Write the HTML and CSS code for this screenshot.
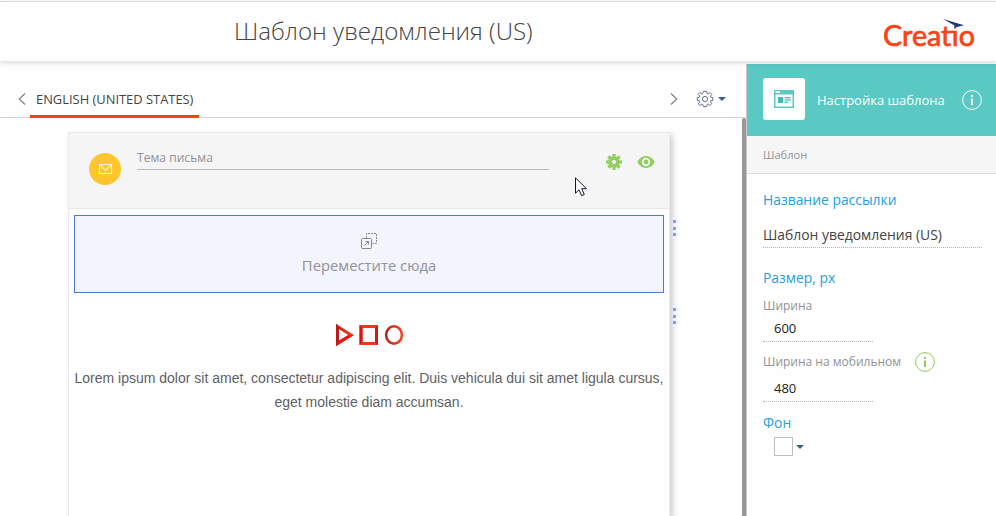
FILE: index.html
```html
<!DOCTYPE html>
<html lang="ru">
<head>
<meta charset="utf-8">
<title>Шаблон уведомления (US)</title>
<link rel="stylesheet" href="styles.css">
</head>
<body>
<div class="app">
  <header class="header">
    <h1 class="title">Шаблон уведомления (US)</h1>
    <svg class="logo" width="104" height="44" viewBox="-4 -2 104 44" role="img">
      <text class="logo-text" x="1" y="27.800" textLength="92" lengthAdjust="spacingAndGlyphs">Creatio</text>
      <rect x="70" y="3" width="9" height="7.600" fill="#fefefe"/>
      <path d="M61 1 82 7.200 75 9 72 10.500 72.500 7.500Z" fill="#173d74"/>
    </svg>
  </header>
  <div class="workspace">
    <main class="editor">
      <nav class="tabs">
        <svg class="chev-left" width="8" height="12" viewBox="0 0 8 12"><path d="M7 .5 1.2 6 7 11.5"/></svg>
        <div class="tab">ENGLISH (UNITED STATES)</div>
        <div class="tab-tools">
          <svg class="chev-right" width="8" height="12" viewBox="0 0 8 12"><path d="M1 .5 6.8 6 1 11.5"/></svg>
          <svg class="gear" width="18" height="18" viewBox="-9 -9 18 18">
            <path d="M-1.7-7.6H1.7L2.1-5.5 3.2-5 5-6.5 6.8-4.6 5.3-2.9 5.7-1.8 7.7-1.5V1.5L5.7 1.8 5.3 2.9 6.8 4.7 4.9 6.5 3.2 5 2.1 5.5 1.7 7.6H-1.7L-2.1 5.5-3.2 5-4.9 6.5-6.8 4.7-5.3 2.9-5.7 1.8-7.7 1.5V-1.5L-5.7-1.8-5.3-2.9-6.8-4.6-5-6.5-3.2-5-2.1-5.5Z"/>
            <circle r="2.6"/>
          </svg>
          <span class="caret"></span>
        </div>
      </nav>
      <div class="canvas">
        <section class="mail">
          <div class="mail-head">
            <svg class="avatar" width="32" height="32" viewBox="0 0 32 32">
              <circle cx="16" cy="16" r="16" fill="#fdc62c"/>
              <rect x="10.500" y="11.500" width="12" height="9"/>
              <path d="M11 12 16.500 17.500 22 12"/>
            </svg>
            <div class="subject">Тема письма</div>
            <svg class="settings" width="16" height="16" viewBox="-8 -8 16 16">
              <g fill="#94cd61"><circle r="5.6"/>
              <path id="tooth" d="M-1.5-8H1.5L1.9-4H-1.9Z"/>
              <use href="#tooth" transform="rotate(45)"/><use href="#tooth" transform="rotate(90)"/><use href="#tooth" transform="rotate(135)"/><use href="#tooth" transform="rotate(180)"/><use href="#tooth" transform="rotate(225)"/><use href="#tooth" transform="rotate(270)"/><use href="#tooth" transform="rotate(315)"/></g>
              <circle r="2.1" fill="#f5f5f6"/>
            </svg>
            <svg class="preview" width="18" height="12" viewBox="0 0 18 12">
              <path d="M.3 6C2 2.300 5.300 0 9 0S16 2.300 17.700 6C16 9.700 12.700 12 9 12S2 9.700.3 6Z" fill="#94cd61"/>
              <circle cx="9" cy="6" r="3.300" fill="#94cd61" stroke="#f5f5f6" stroke-width="1.700"/>
            </svg>
          </div>
          <div class="mail-body">
            <div class="drop">
              <svg class="move" width="16" height="16" viewBox="0 0 16 16">
                <path d="M5.500 5V.5H15.500V10.500H11.500" stroke-dasharray="2 1"/>
                <rect x=".5" y="5.500" width="10" height="10" rx="1"/>
                <path d="M3.500 12.500 7.500 8.500M4.500 8.500H7.500V11.500"/>
              </svg>
              <span>Переместите сюда</span>
            </div>
            <svg class="shapes" width="70" height="24" viewBox="0 0 70 24">
              <defs>
                <linearGradient id="red"><stop offset="0" stop-color="#b5231c"/><stop offset="1" stop-color="#fb3e1c"/></linearGradient>
              </defs>
              <path d="M2.500 3.500 16 12 2.500 20.500Z" fill="none" stroke="url(#red)" stroke-width="3"/>
              <path d="M1 1V23L4 18V6Z" fill="#b91b18"/><path d="M1 23 4 17.500 13.500 12H19Z" fill="#ea1710"/>
              <rect x="26" y="3.500" width="15.500" height="17" fill="none" stroke="#f93619" stroke-width="3"/>
              <path d="M24.500 2 27.500 5V19L24.500 22ZM43 2V22L40 19V5Z" fill="#dc1512"/>
              <ellipse cx="59" cy="12" rx="7.900" ry="8.700" fill="none" stroke="url(#red)" stroke-width="2.500"/>
            </svg>
            <p class="lorem">Lorem ipsum dolor sit amet, consectetur adipiscing elit. Duis vehicula dui sit amet ligula cursus,<br>eget molestie diam accumsan.</p>
          </div>
          <div class="dots dots-first"><i></i><i></i><i></i></div>
          <div class="dots dots-second"><i></i><i></i><i></i></div>
        </section>
        <div class="scrollbar"></div>
      </div>
    </main>
    <aside class="sidebar">
      <div class="side-head">
        <div class="side-icon">
          <svg width="20" height="18" viewBox="0 0 20 18">
            <rect width="20" height="18" fill="#5ac8c3"/>
            <path d="M1.500 1H6V3H1.500ZM1.500 4.500H18.500V16.500H1.500Z" fill="#fefefe"/>
            <path d="M4 7H9V13H4ZM10.500 7H16.500V8.200H10.500ZM10.500 9.300H17V10.500H10.500ZM10.500 11.500H14V12.700H10.500Z" fill="#45bab5"/>
          </svg>
        </div>
        <span class="side-title">Настройка шаблона</span>
        <svg class="info" width="20" height="20" viewBox="0 0 20 20"><circle cx="10" cy="10" r="9.400"/><path d="M9 5H11V7H9ZM8.500 8.500H11V15H9V9.500H8.500Z"/></svg>
      </div>
      <div class="crumb">Шаблон</div>
      <div class="form">
        <h2 class="heading">Название рассылки</h2>
        <div class="field name">Шаблон уведомления (US)</div>
        <h2 class="heading size">Размер, px</h2>
        <div class="label">Ширина</div>
        <div class="field number">600</div>
        <div class="label mobile">Ширина на мобильном
          <svg class="info green" width="20" height="20" viewBox="0 0 20 20"><circle cx="10" cy="10" r="9.400"/><path d="M9 5H11V7H9ZM9 8.500H11V15H9Z"/></svg>
        </div>
        <div class="field number second">480</div>
        <h2 class="heading background">Фон</h2>
        <div class="color"><span class="swatch"></span><span class="caret"></span></div>
      </div>
    </aside>
  </div>
  <svg class="cursor" width="13" height="20" viewBox="0 0 13 20"><path d="M.5.800V16.200L4 12.800 6.700 18.700 9.300 17.500 6.700 11.700H11.500Z" fill="#fff" stroke="#161625"/></svg>
</div>
</body>
</html>
```

FILE: styles.css
```css
* { box-sizing: border-box; }
body { margin: 0; background: #fefefe; font-family: "Open Sans", sans-serif; color: #444; }
h1, h2, p { margin: 0; font-weight: 400; }
svg { display: block; flex: none; }
.app { position: relative; width: 996px; height: 516px; overflow: hidden; padding-top: 1px; display: flex; flex-direction: column; }
.header { position: relative; z-index: 2; height: 60px; flex: none; display: flex; justify-content: space-between; border-top: 1px solid #d8d8dc; background: #fefefe; box-shadow: 0 2px 5px rgba(40, 40, 60, .16); padding: 0 14px 0 234px; }
.title { font-size: 24.100px; font-weight: 300; line-height: 34px; padding-top: 12px; white-space: nowrap; color: #444; }
.logo { margin-top: 14px; overflow: visible; }
.logo-text { font-family: Lato, sans-serif; font-size: 29px; fill: #ff4013; stroke: #ff4013; stroke-width: .7; }
.workspace { flex: 1; display: flex; min-height: 0; }
.editor { width: 746px; flex: none; display: flex; flex-direction: column; }
.tabs { height: 57px; flex: none; display: flex; align-items: flex-end; border-bottom: 1px solid #d4d4d9; padding-left: 18px; }
.tabs path, .tabs circle { fill: none; stroke: #7a7a85; stroke-width: 1.1; }
.chev-left { margin: 0 4px 12px 0; }
.tab { width: 169px; height: 35px; border-bottom: 3px solid #ff4013; margin-bottom: -1px; padding-left: 6px; line-height: 33px; font-size: 12.900px; white-space: nowrap; }
.tab-tools { display: flex; align-items: center; height: 18px; margin: 0 20px 9px auto; }
.chev-right { margin-right: 1px; }
.gear { margin-left: 17px; margin-right: 1px; }
.tabs .gear path, .tabs .gear circle { stroke: #536186; stroke-width: .9; }
.caret { border: 4.5px solid transparent; border-top: 4px solid #3c5e96; border-bottom: 0; margin-left: 3px; }
.canvas { flex: 1; min-height: 0; display: flex; justify-content: space-between; padding-left: 68px; }
.mail { position: relative; width: 602px; margin-top: 14px; border: 1px solid #ebebef; border-bottom: 0; box-shadow: 3px 3px 5px rgba(50, 50, 70, .22); background: #fefefe; }
.mail-head { height: 76px; display: flex; align-items: flex-start; background: #f5f5f6; border-bottom: 1px solid #e6e8ee; padding: 20px 14px 0 20px; }
.avatar rect, .avatar path { fill: none; stroke: #fff6d8; stroke-width: 1.1; }
.subject { width: 412px; height: 17px; border-bottom: 1px solid #b9b9bd; margin-left: 16px; font-size: 12.100px; line-height: 10px; color: #929297; }
.settings { margin: 1px 0 0 57px; }
.preview { margin: 3px 0 0 15px; }
.mail-body { padding: 6px 5px 0; display: flex; flex-direction: column; align-items: center; }
.drop { width: 590px; height: 78px; border: 1px solid #487bdd; background: #f2f4fe; display: flex; flex-direction: column; align-items: center; padding-top: 17px; font-size: 14.800px; line-height: 20px; color: #929297; }
.move { margin-bottom: 6px; }
.move path, .move rect { fill: none; stroke: #858790; }
.shapes { margin: 30px 0 0 2px; }
.lorem { margin-top: 19px; font-family: "Liberation Sans", sans-serif; font-size: 14px; line-height: 24px; color: #616165; text-align: center; white-space: nowrap; }
.dots { position: absolute; left: 604px; display: flex; flex-direction: column; gap: 3.500px; }
.dots i { width: 3px; height: 3px; background: #7d9ff0; }
.dots-first { top: 87px; }
.dots-second { top: 175px; }
.scrollbar { width: 4px; background: #98989a; border-radius: 2px 2px 0 0; }
.sidebar { flex: 1; margin-top: 3px; border-left: 1px solid #c9c9cd; }
.side-head { height: 72px; background: #5ac8c3; display: flex; align-items: center; padding: 0 14px 0 16px; color: #fff; }
.side-icon { width: 42px; height: 42px; border-radius: 3px; background: #fefefe; display: flex; align-items: center; justify-content: center; margin-bottom: 2px; }
.side-title { margin-left: 12px; font-size: 13px; white-space: nowrap; }
.info { margin-left: auto; }
.info circle { fill: none; stroke: #fff; }
.info path { fill: #fff; }
.crumb { height: 38px; background: #f6f6f7; border-bottom: 1px solid #e0e0e4; padding-left: 16px; font-size: 11.100px; line-height: 38px; color: #929297; }
.form { padding: 16px 14px 0 16px; }
.heading { font-size: 13.900px; line-height: 20px; color: #249fe3; }
.field { border-bottom: 1px dotted #b4b4b8; font-size: 13px; color: #444; }
.name { height: 38px; line-height: 50px; font-size: 13.900px; }
.size { margin-top: 20px; }
.label { font-size: 12px; line-height: 18px; color: #929297; white-space: nowrap; }
.size + .label { margin-top: 9px; }
.number { width: 110px; height: 27px; padding-left: 11px; line-height: 27px; color: #222; }
.mobile { display: flex; align-items: center; width: 172px; height: 20px; margin-top: 10px; }
.second { height: 30px; line-height: 32px; }
.green circle { stroke: #8fcb5b; }
.green path { fill: #8fcb5b; }
.background { margin-top: 11px; }
.color { display: flex; align-items: center; padding: 4px 0 0 11px; }
.swatch { width: 19px; height: 19px; border: 1px solid #bdbdbf; background: #fefefe; }
.cursor { position: absolute; left: 575px; top: 177px; z-index: 3; }
```
